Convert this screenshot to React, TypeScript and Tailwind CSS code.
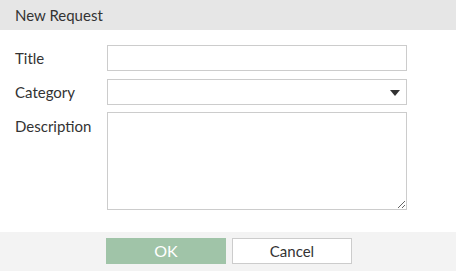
export default function App() {
  return (
    <div className="w-[456px] h-[271px] bg-white flex flex-col font-['Lato','Liberation_Sans',sans-serif] text-[15px] text-[#333]">
      <div className="h-[30px] bg-[#e6e6e6] px-[15px] flex items-center">New Request</div>

      <div className="flex-1 pt-[15px] px-[15px]">
        <div className="flex items-center h-[26px]">
          <label className="w-[92px]">Title</label>
          <input type="text" className="w-[300px] h-[26px] border border-[#ccc] bg-white outline-none" />
        </div>
        <div className="flex items-center h-[26px] mt-[8px]">
          <label className="w-[92px]">Category</label>
          <div className="relative w-[300px] h-[26px] border border-[#ccc] bg-white">
            <svg className="absolute right-[6px] top-[10px]" width="10" height="6" viewBox="0 0 10 6">
              <path d="M0 0H10L5 6Z" fill="#333" />
            </svg>
          </div>
        </div>
        <div className="flex items-start mt-[7px]">
          <label className="w-[92px] pt-[3px]">Description</label>
          <textarea className="w-[300px] h-[98px] border border-[#ccc] bg-white outline-none" />
        </div>
      </div>

      <div className="h-[39px] bg-[#f3f3f3] flex justify-center pt-[6px] pl-[2px] gap-[6px]">
        <button className="w-[120px] h-[26px] bg-[#a0c4a8] text-white text-[16px]">OK</button>
        <button className="w-[120px] h-[26px] bg-white border border-[#ccc] text-[#333]">Cancel</button>
      </div>
    </div>
  )
}
